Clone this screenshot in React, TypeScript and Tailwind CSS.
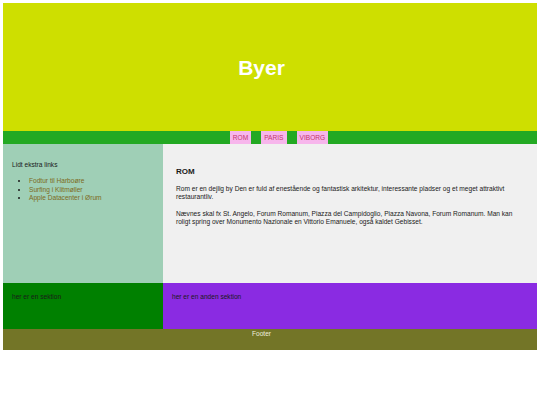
const links = ["Fodtur til Harboøre", "Surfing i Klitmøller", "Apple Datacenter i Ørum"];
const nav = ["ROM", "PARIS", "VIBORG"];

export default function App() {
	return (
		<div className="bg-white w-[540px] h-[405px] p-[3px] font-['Liberation_Sans',Arial,sans-serif] text-[6.6px] leading-[8px] text-[#1a1a1a]">
			<div className="flex flex-col w-[534px]">
				<header className="h-[128px] bg-[#cedf00] flex items-center justify-center pr-[17px]">
					<h1 className="text-white font-bold text-[21px] leading-none">Byer</h1>
				</header>
				<nav className="h-[13px] bg-[#23a923] flex items-stretch justify-center gap-[10px] pl-[18px]">
					{nav.map((n) => (
						<a key={n} className="bg-[#f7b6ec] text-[#c4356c] px-[3px] flex items-center">
							{n}
						</a>
					))}
				</nav>
				<div className="flex h-[139px]">
					<aside className="w-[160px] bg-[#9fcfb6] pt-[17px] pl-[9px]">
						<p>Lidt ekstra links</p>
						<ul className="list-disc pl-[17px] mt-[8px] leading-[8.5px]">
							{links.map((l) => (
								<li key={l}>
									<a className="text-[#7d6a1c]">{l}</a>
								</li>
							))}
						</ul>
					</aside>
					<main className="flex-1 bg-[#f0f0f0] pt-[23px] pl-[13px] pr-[14px]">
						<h2 className="font-bold text-[8px] leading-[10px]">ROM</h2>
						<p className="mt-[8px]">
							Rom er en dejlig by Den er fuld af enestående og fantastisk arkitektur, interessante pladser og et meget attraktivt restaurantliv.
						</p>
						<p className="mt-[9px]">
							Nævnes skal fx St. Angelo, Forum Romanum, Piazza del Campidoglio, Piazza Navona, Forum Romanum. Man kan roligt spring over Monumento Nazionale en Vittorio Emanuele, også kaldet Gebisset.
						</p>
					</main>
				</div>
				<div className="flex h-[46px]">
					<section className="w-[160px] bg-[#008000] pt-[10px] pl-[9px]">her er en sektion</section>
					<section className="flex-1 bg-[#8a2be2] pt-[10px] pl-[9px]">her er en anden sektion</section>
				</div>
				<footer className="h-[21px] bg-[#737527] text-[#eeeedd] text-center pt-[1px] pr-[17px]">Footer</footer>
			</div>
		</div>
	);
}
